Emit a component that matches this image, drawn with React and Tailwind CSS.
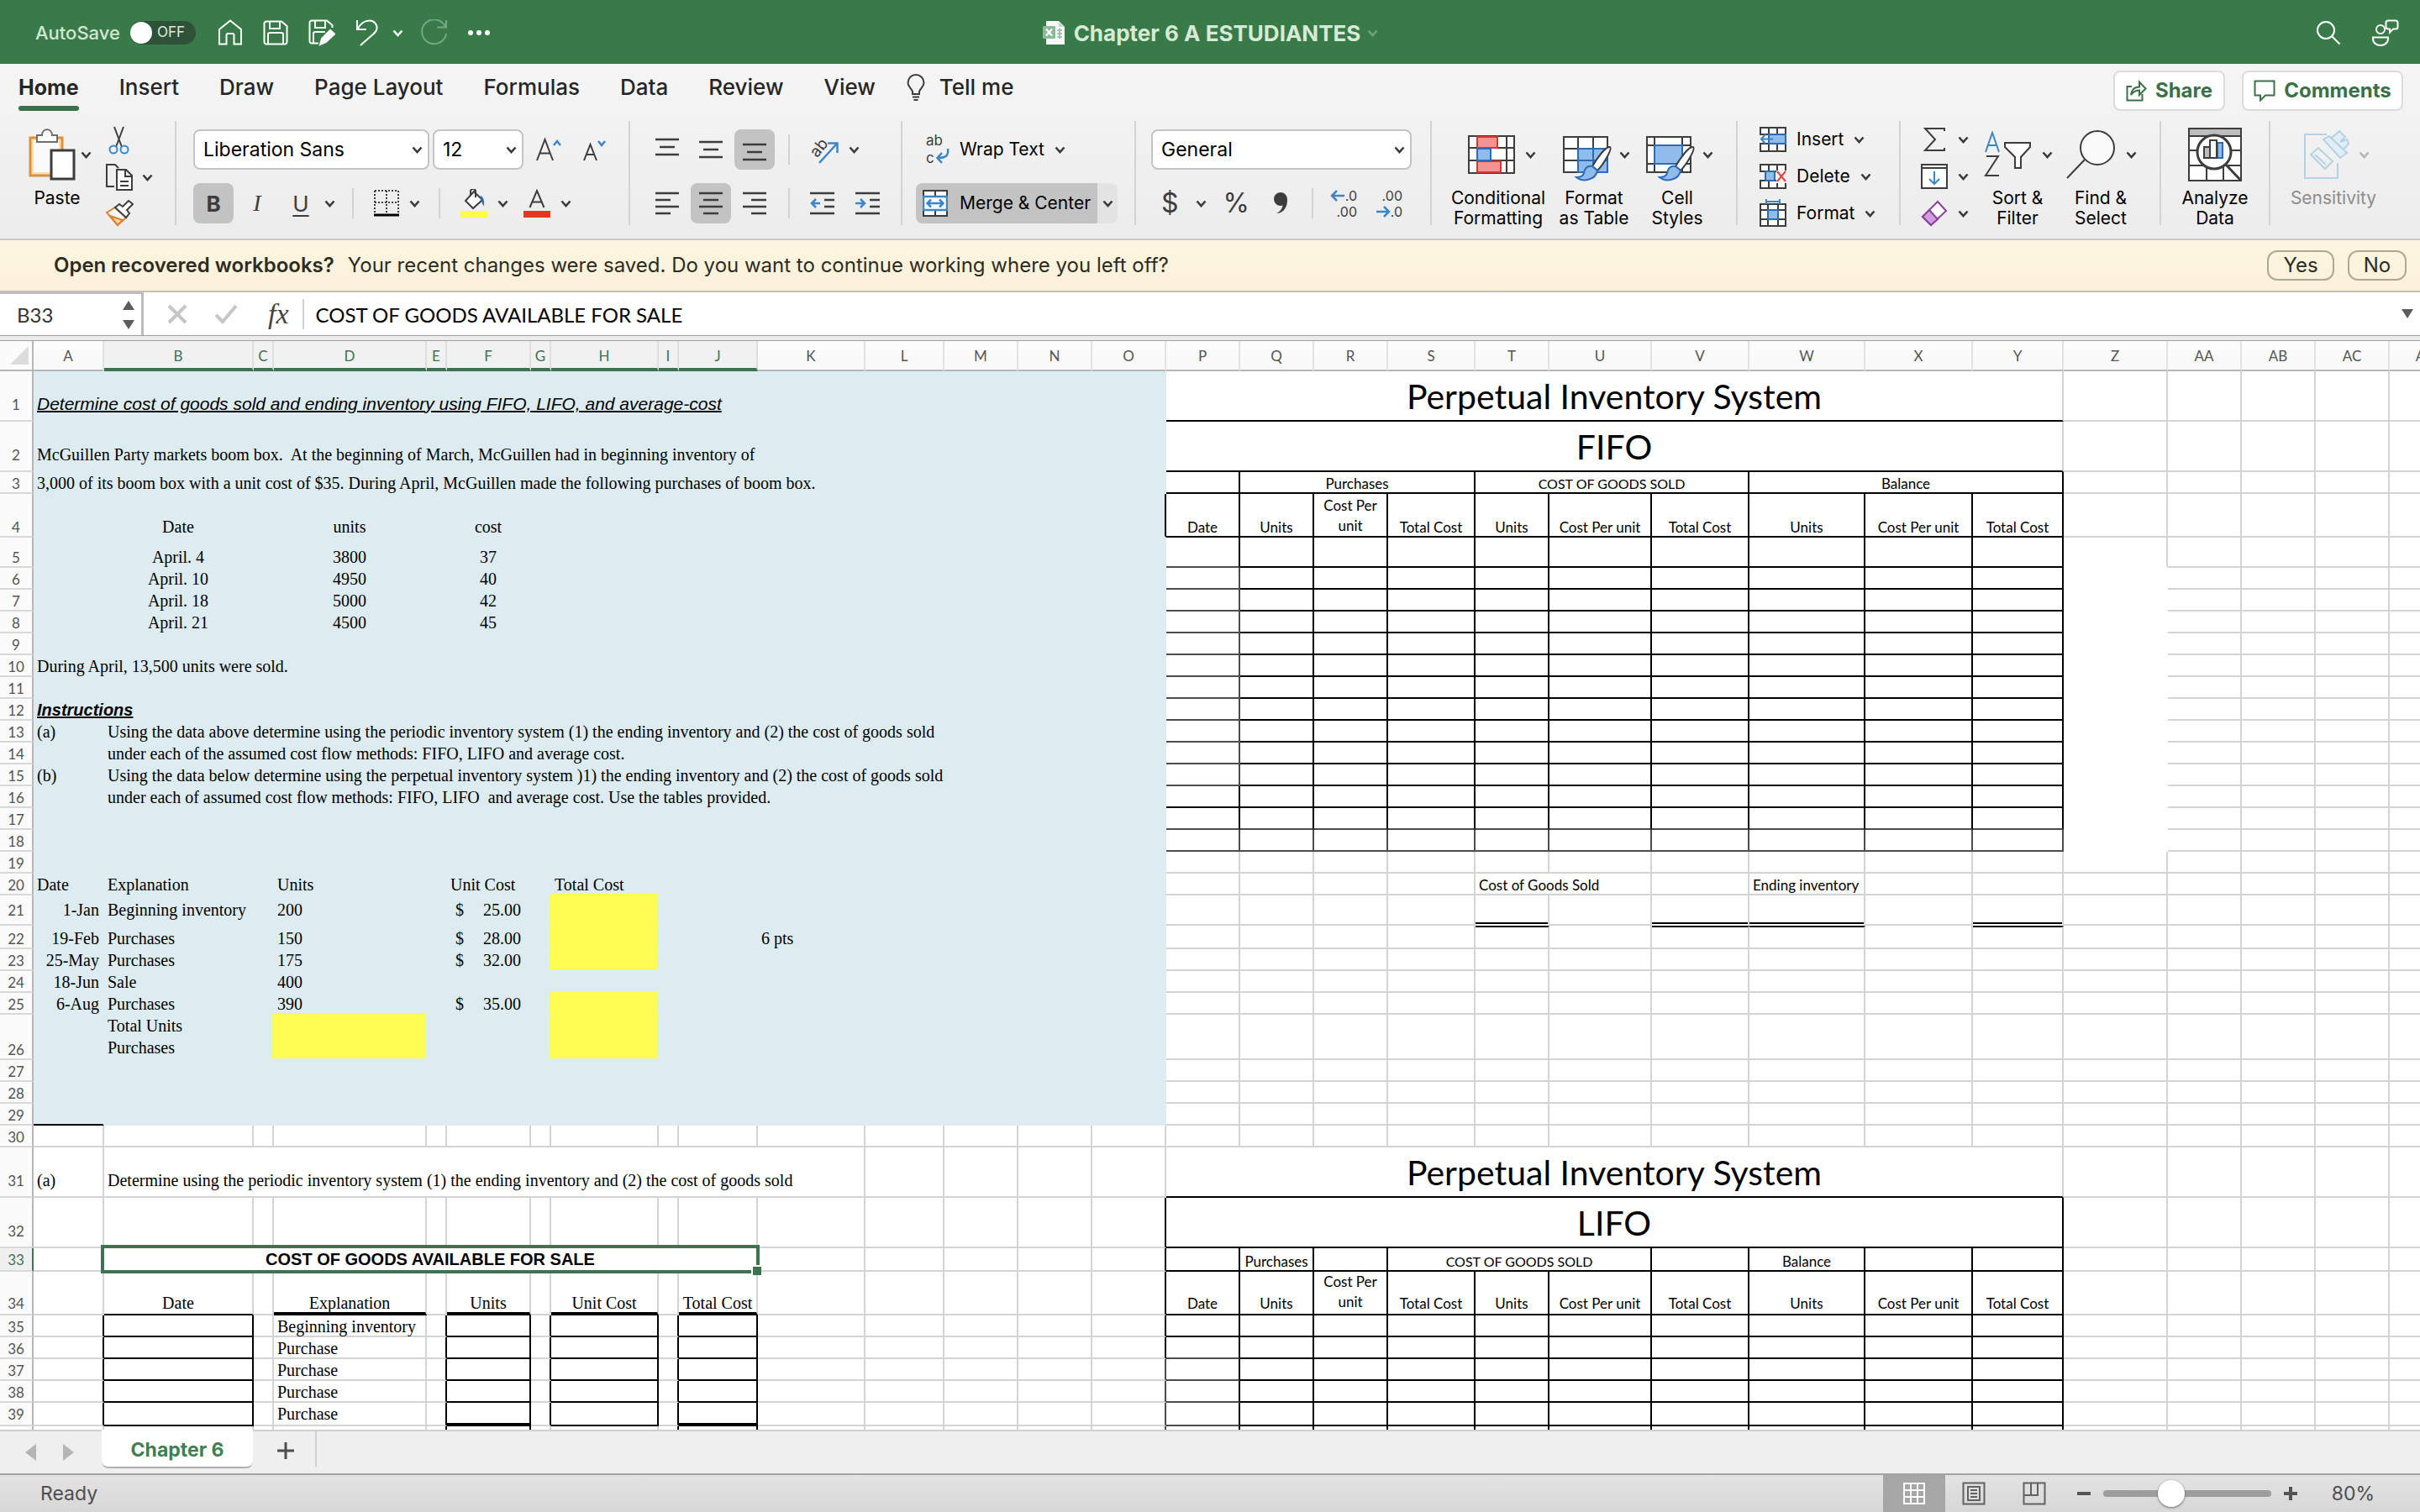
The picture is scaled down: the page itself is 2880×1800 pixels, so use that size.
import clsx from "clsx";

const COLS = [
  ["A", 84], ["B", 178], ["C", 24], ["D", 182], ["E", 24], ["F", 100], ["G", 24], ["H", 128], ["I", 24], ["J", 94],
  ["K", 128], ["L", 94], ["M", 88], ["N", 88], ["O", 88], ["P", 88], ["Q", 88], ["R", 88], ["S", 104], ["T", 88],
  ["U", 122], ["V", 116], ["W", 138], ["X", 128], ["Y", 108], ["Z", 124], ["AA", 88], ["AB", 88], ["AC", 88], ["AD", 88],
];

const ROW_HEIGHTS = [
  60, 60, 26, 52, 36, 26, 26, 26, 26, 26, 26, 26, 26, 26, 26, 26, 26, 26, 26, 26,
  36, 28, 26, 26, 26, 54, 26, 26, 26, 26, 60, 60, 28, 52, 26, 26, 26, 26, 28, 26,
];

const TABLE_WIDTH = 40 + COLS.reduce((sum, [, w]) => sum + w, 0);

// extra space under the baseline in the taller rows
const ROW_PAD = { 1: "pb-2", 2: "pb-2", 21: "pb-1.5", 31: "pb-2", 32: "pb-2", 33: "pb-0.5", 34: "pb-0.5", 39: "pb-0.5" };

const SERIF = "font-['Liberation_Serif',serif] text-[20px] leading-[22px]";
const LATO = "font-['Lato',sans-serif] text-[17px] leading-5";
const LATO_CAPS = "font-['Lato',sans-serif] text-[16px] leading-5";
const TITLE = "font-['Lato',sans-serif] text-[41px] leading-[56px]";
const ARIAL = "font-['Liberation_Sans',sans-serif] text-[20px] leading-[22px]";
const ARIAL_LG = "font-['Liberation_Sans',sans-serif] text-[21px] leading-[22px]";

const CELLS = {
  A1: { t: "Determine cost of goods sold and ending inventory using FIFO, LIFO, and average-cost", span: 15, font: ARIAL_LG, c: "italic underline decoration-2" },
  A2: { t: "McGuillen Party markets boom box.  At the beginning of March, McGuillen had in beginning inventory of", span: 15 },
  A3: { t: "3,000 of its boom box with a unit cost of $35. During April, McGuillen made the following purchases of boom box.", span: 15 },
  B4: { t: "Date", align: "center" },
  D4: { t: "units", align: "center" },
  F4: { t: "cost", align: "center" },
  B5: { t: "April. 4", align: "center" },
  D5: { t: "3800", align: "center" },
  F5: { t: "37", align: "center" },
  B6: { t: "April. 10", align: "center" },
  D6: { t: "4950", align: "center" },
  F6: { t: "40", align: "center" },
  B7: { t: "April. 18", align: "center" },
  D7: { t: "5000", align: "center" },
  F7: { t: "42", align: "center" },
  B8: { t: "April. 21", align: "center" },
  D8: { t: "4500", align: "center" },
  F8: { t: "45", align: "center" },
  A10: { t: "During April, 13,500 units were sold.", span: 15 },
  A12: { t: "Instructions", span: 15, font: ARIAL, c: "font-bold italic underline decoration-2" },
  A13: { t: "(a)" },
  B13: { t: "Using the data above determine using the periodic inventory system (1) the ending inventory and (2) the cost of goods sold", span: 14 },
  B14: { t: "under each of the assumed cost flow methods: FIFO, LIFO and average cost.", span: 14 },
  A15: { t: "(b)" },
  B15: { t: "Using the data below determine using the perpetual inventory system )1) the ending inventory and (2) the cost of goods sold", span: 14 },
  B16: { t: "under each of assumed cost flow methods: FIFO, LIFO  and average cost. Use the tables provided.", span: 14 },
  A20: { t: "Date" },
  B20: { t: "Explanation" },
  D20: { t: "Units" },
  F20: { t: "Unit Cost" },
  H20: { t: "Total Cost" },
  A21: { t: "1-Jan", align: "right" },
  B21: { t: "Beginning inventory" },
  D21: { t: "200" },
  F21: { money: "25.00" },
  A22: { t: "19-Feb", align: "right" },
  B22: { t: "Purchases" },
  D22: { t: "150" },
  F22: { money: "28.00" },
  K22: { t: "6 pts" },
  A23: { t: "25-May", align: "right" },
  B23: { t: "Purchases" },
  D23: { t: "175" },
  F23: { money: "32.00" },
  A24: { t: "18-Jun", align: "right" },
  B24: { t: "Sale" },
  D24: { t: "400" },
  A25: { t: "6-Aug", align: "right" },
  B25: { t: "Purchases" },
  D25: { t: "390" },
  F25: { money: "35.00" },
  B26: { t: "Total Units\nPurchases", font: "font-['Liberation_Serif',serif] text-[20px] leading-[26px]" },
  A31: { t: "(a)" },
  B31: { t: "Determine using the periodic inventory system (1) the ending inventory and (2) the cost of goods sold", span: 10 },
  B33: { t: "COST OF GOODS AVAILABLE FOR SALE", span: 9, selected: true, font: ARIAL, align: "center", c: "font-bold" },
  B34: { t: "Date", align: "center" },
  D34: { t: "Explanation", align: "center" },
  F34: { t: "Units", align: "center" },
  H34: { t: "Unit Cost", align: "center" },
  J34: { t: "Total Cost", align: "center" },
  D35: { t: "Beginning inventory" },
  D36: { t: "Purchase" },
  D37: { t: "Purchase" },
  D38: { t: "Purchase" },
  D39: { t: "Purchase" },

  P1: { t: "Perpetual Inventory System", span: 10, font: TITLE, align: "center", flush: true },
  P2: { t: "FIFO", span: 10, font: TITLE, align: "center", flush: true },
  Q3: { t: "Purchases", span: 3, font: LATO, align: "center" },
  T3: { t: "COST OF GOODS SOLD", span: 3, font: LATO_CAPS, align: "center" },
  W3: { t: "Balance", span: 3, font: LATO, align: "center" },
  T20: { t: "Cost of Goods Sold", span: 2, font: LATO },
  W20: { t: "Ending inventory", font: LATO },
  P31: { t: "Perpetual Inventory System", span: 10, font: TITLE, align: "center", flush: true },
  P32: { t: "LIFO", span: 10, font: TITLE, align: "center", flush: true },
  Q33: { t: "Purchases", font: LATO, align: "center", flush: true },
  S33: { t: "COST OF GOODS SOLD", span: 3, font: LATO_CAPS, align: "center", flush: true },
  W33: { t: "Balance", font: LATO, align: "center", flush: true },
};

const TABLE_HEADS = {
  P: "Date",
  Q: "Units",
  R: "Cost Per\nunit",
  S: "Total Cost",
  T: "Units",
  U: "Cost Per unit",
  V: "Total Cost",
  W: "Units",
  X: "Cost Per unit",
  Y: "Total Cost",
};

Object.entries(TABLE_HEADS).forEach(([col, t]) => {
  const font = col === "R" ? "font-['Lato',sans-serif] text-[17px] leading-6" : LATO;
  CELLS[`${col}4`] = { t, font, align: "center" };
  CELLS[`${col}34`] = { t, font, align: "center" };
});

const ALIGN = { left: "px-1", center: "text-center", right: "px-1 text-right" };

const RIGHT = {
  grid: "border-r-[#d4d4d4]",
  black: "border-r-black",
  thin: "border-r-[#4c4c4c]",
  blue: "border-r-[#ddecf1]",
  yellow: "border-r-[#fffd54]",
  white: "border-r-white",
};

const BOTTOM = {
  grid: "border-b-2 border-b-[#d4d4d4]",
  black: "border-b-2 border-b-black",
  thick: "border-b-4 border-b-black",
  thin: "border-b-2 border-b-[#4c4c4c]",
  blue: "border-b-2 border-b-[#ddecf1]",
  yellow: "border-b-2 border-b-[#fffd54]",
  white: "border-b-2 border-b-white",
};

function rightEdge(i, r) {
  if (r <= 29 && i <= 14) {
    if (i === 6 && [21, 22, 23, 25, 26].includes(r)) return "yellow";
    if (i === 2 && r === 26) return "yellow";
    if (i === 14 && r === 4) return "black";
    return "blue";
  }
  if (i === 14) return r < 32 ? "grid" : r < 37 ? "black" : "thin";
  if (i >= 15 && i <= 24) {
    if (r === 18 || (i === 15 && r >= 6 && r <= 15)) return "thin";
    if ((r >= 3 && r <= 17) || r >= 32) return "black";
    return "grid";
  }
  if (i === 25 && r >= 6 && r <= 18) return "white";
  if (r >= 35 && r <= 39 && [0, 1, 4, 5, 6, 7, 8, 9].includes(i)) return "black";
  if (r === 40 && [4, 5, 8, 9].includes(i)) return "black";
  return "grid";
}

function bottomEdge(i, r) {
  if (r <= 29 && i <= 14) {
    if (i === 0 && r === 29) return "black";
    if (i === 7 && [20, 21, 22, 24, 25].includes(r)) return "yellow";
    if (i === 3 && r === 25) return "yellow";
    return "blue";
  }
  if (i >= 15 && i <= 24) {
    if (r <= 4) return "black";
    if (r <= 18) return r >= 17 || (i === 15 && r <= 15) ? "thin" : "black";
    if (r === 21 && isDouble(i)) return "white";
    if (r < 31) return "grid";
    return i === 15 && r >= 36 ? "thin" : "black";
  }
  if (i === 25 && r >= 5 && r <= 18) return "white";
  if (r === 34 && i === 1) return "black";
  if (r === 34 && [3, 5, 7, 9].includes(i)) return "thick";
  if (r >= 35 && r <= 38 && [1, 5, 7, 9].includes(i)) return "black";
  if (r === 39 && [1, 7].includes(i)) return "black";
  if (r === 39 && [5, 9].includes(i)) return "thick";
  return "grid";
}

function isDouble(i) {
  return [19, 21, 22, 24].includes(i);
}

function fill(i, r) {
  if (i === 7 && [21, 22, 23, 25, 26].includes(r)) return "bg-[#fffd54]";
  if (i === 3 && r === 26) return "bg-[#fffd54]";
  return i <= 14 && r <= 29 ? "bg-[#ddecf1]" : "bg-white";
}

function Cell({ i, r, cell }) {
  const last = i + (cell?.span ?? 1) - 1;
  const bottom = bottomEdge(i, r);
  const pad = !cell?.flush && bottom !== "thick" && ROW_PAD[r];
  return (
    <td
      colSpan={cell?.span}
      className={clsx(
        "border-r-2 p-0 align-bottom whitespace-pre text-black",
        RIGHT[rightEdge(last, r)],
        BOTTOM[bottom],
        fill(i, r),
        r === 21 && isDouble(i) && "shadow-[inset_0_-2px_0_#000]",
        r === 22 && isDouble(i) && "border-t-2 border-t-black",
        cell?.selected && "relative"
      )}
    >
      {cell?.t && <div className={clsx(cell.font ?? SERIF, cell.c, ALIGN[cell.align ?? "left"], pad)}>{cell.t}</div>}
      {cell?.money && (
        <div className={clsx("flex justify-between px-2.5", SERIF, pad)}>
          <span>$</span>
          <span>{cell.money}</span>
        </div>
      )}
      {cell?.selected && (
        <>
          <span className="absolute -inset-1 border-4 border-[#3f7250]" />
          <span className="absolute -right-1.5 -bottom-1.5 size-3 border-t-2 border-l-2 border-white bg-[#3f7250]" />
        </>
      )}
    </td>
  );
}

function Row({ r }) {
  const cells = [];
  for (let i = 0; i < COLS.length; ) {
    const cell = CELLS[`${COLS[i][0]}${r}`];
    cells.push(<Cell key={i} i={i} r={r} cell={cell} />);
    i += cell?.span ?? 1;
  }
  const active = r === 33;
  return (
    <tr style={{ height: ROW_HEIGHTS[r - 1] }}>
      <th
        scope="row"
        className={clsx(
          "border-r-2 border-b-2 border-b-[#d9d9d9] p-0 text-center align-bottom font-['Lato',sans-serif] text-[17px] leading-5 font-normal",
          active ? "border-r-[#3f7250] bg-[#f0f0f0] text-[#3f7250]" : "border-r-[#b7b7b7] bg-[#fbfbfb] text-[#555]"
        )}
      >
        <div className={clsx(ROW_PAD[r])}>{r}</div>
      </th>
      {cells}
    </tr>
  );
}

function Sheet() {
  return (
    <div className="min-h-0 flex-1 overflow-hidden bg-white">
      <table className="table-fixed border-separate border-spacing-0" style={{ width: TABLE_WIDTH }}>
        <colgroup>
          <col className="w-10" />
          {COLS.map(([name, w]) => (
            <col key={name} style={{ width: w }} />
          ))}
        </colgroup>
        <thead>
          <tr className="h-9">
            <th className="border-r-2 border-b-2 border-r-[#b7b7b7] border-b-[#b7b7b7] bg-[#fbfbfb] p-0" aria-label="Select all">
              <svg className="ml-3 size-[22px]" viewBox="0 0 22 22">
                <path d="M22 0V22H0Z" fill="#dcdcdc" />
              </svg>
            </th>
            {COLS.map(([name], i) => (
              <th
                key={name}
                scope="col"
                className={clsx(
                  "border-r-2 p-0 text-center font-['Lato',sans-serif] text-[17px] leading-6 font-normal",
                  i >= 1 && i <= 9
                    ? "border-b-4 border-r-[#dedede] border-b-[#3f7250] bg-[#f1f1f1] pt-1 text-[#3f7250]"
                    : "border-b-2 border-r-[#e2e2e2] border-b-[#b7b7b7] bg-linear-to-b from-[#fdfdfd] to-[#f8f8f8] pt-0.5 text-[#555]"
                )}
              >
                {name}
              </th>
            ))}
          </tr>
        </thead>
        <tbody>
          {ROW_HEIGHTS.map((_, k) => (
            <Row key={k} r={k + 1} />
          ))}
        </tbody>
      </table>
    </div>
  );
}

function Chev({ className }) {
  return (
    <svg className={clsx("h-[9px] w-[13px] shrink-0", className ?? "text-[#3a3a3a]")} viewBox="0 0 13 9" fill="none" stroke="currentColor" strokeWidth="2.6">
      <path d="M1.5 1.5 6.5 7 11.5 1.5" />
    </svg>
  );
}

function Icon({ w, h, className, children, label }) {
  return (
    <svg className={clsx("shrink-0", className)} width={w} height={h} viewBox={`0 0 ${w} ${h}`} fill="none" stroke="#3d3d3d" strokeWidth="2" role={label ? "img" : undefined} aria-label={label}>
      {children}
    </svg>
  );
}

function TitleBar() {
  return (
    <header className="grid h-19 grid-cols-[1fr_auto_1fr] items-center bg-[#387b49] px-6 pt-0.5 text-white">
      <div className="flex items-center pl-4.5">
        <span id="autosave" className="w-[113px] text-[22px] font-medium text-[#d3e6d3]">AutoSave</span>
        <button role="switch" aria-checked="false" aria-labelledby="autosave" className="flex h-7 w-[78px] items-center rounded-full bg-[#2d5238] text-[17px] text-[#dfe8e0]">
          <span className="mr-1.5 size-[26px] rounded-full bg-white" />
          OFF
        </button>
        <button aria-label="Home" className="ml-[26px]">
          <Icon w={30} h={32} className="stroke-white"><path d="M2 12 15 1.5 28 12V29.5H19.5V19a2 2 0 0 0-2-2H12.5a2 2 0 0 0-2 2V29.5H2Z" /></Icon>
        </button>
        <button aria-label="Save" className="ml-6">
          <Icon w={30} h={30} className="stroke-white"><path d="M4 1.5H22L28.5 7V26a2.5 2.5 0 0 1-2.5 2.5H4A2.5 2.5 0 0 1 1.5 26V4A2.5 2.5 0 0 1 4 1.5ZM8 2V10H20V2M6 28V17a2 2 0 0 1 2-2H22a2 2 0 0 1 2 2V28" /></Icon>
        </button>
        <button aria-label="Save a copy" className="ml-6">
          <Icon w={32} h={32} className="stroke-white">
            <path d="M12 28.5H4A2.5 2.5 0 0 1 1.5 26V4A2.5 2.5 0 0 1 4 1.5H22L28.5 7V10M8 2V10H20V2M6 28V17a2 2 0 0 1 2-2H20" />
            <path d="M14 30 16 23 26 13 31 17.5 21 27Z" fill="white" />
          </Icon>
        </button>
        <button aria-label="Undo" className="ml-6">
          <Icon w={28} h={32} className="stroke-white"><path d="M2 1V12H13M2.5 11.5C6 5 11 1.5 17 1.5C22 1.5 26 6 25.5 11C25 16 20 18 6 31" /></Icon>
        </button>
        <button aria-label="Undo history" className="ml-4"><Chev className="text-white" /></button>
        <button aria-label="Redo" className="ml-5">
          <Icon w={34} h={32} className="stroke-[#76a582]"><path d="M31 1V9.5H20M30 9A14.5 14.5 0 1 0 31 17" /></Icon>
        </button>
        <button aria-label="More commands" className="ml-5.5">
          <Icon w={28} h={8} className="fill-white stroke-none"><circle cx="4" cy="4" r="3" /><circle cx="14" cy="4" r="3" /><circle cx="24" cy="4" r="3" /></Icon>
        </button>
      </div>
      <h1 className="flex items-center text-[26px] font-bold text-[#d7ead8]">
        <Icon w={28} h={30} className="mr-2.5 stroke-none">
          <path d="M5 1H20L27 8V29H5Z" fill="#f5faf5" />
          <path d="M20 1V8H27Z" fill="#c9dccb" />
          <rect x="1" y="7" width="15" height="15" rx="1" fill="#8fb89a" />
          <path d="M5 10.5 12 18.5M12 10.5 5 18.5" stroke="#fff" strokeWidth="2" />
          <path d="M18 12H24M18 16H24M18 20H24M21 10V22" stroke="#8fb89a" strokeWidth="1.5" />
        </Icon>
        Chapter 6 A ESTUDIANTES
        <Chev className="ml-2 text-[#6ea27b]" />
      </h1>
      <div className="flex items-center justify-end gap-9">
        <button aria-label="Search"><Icon w={30} h={30} className="stroke-white"><circle cx="12" cy="12" r="10" /><path d="M19.5 19.5 28.5 28.5" /></Icon></button>
        <button aria-label="Collaborate">
          <Icon w={34} h={32} className="stroke-white">
            <circle cx="11" cy="12" r="5" />
            <path d="M2 21.5H20V23C20 28 16 31 11 31S2 28 2 23Z" />
            <path d="M20 1.5H29a2.5 2.5 0 0 1 2.5 2.5V9a2.5 2.5 0 0 1-2.5 2.5H26L22 15.5V11.5H20A2.5 2.5 0 0 1 17.5 9V4A2.5 2.5 0 0 1 20 1.5Z" />
          </Icon>
        </button>
      </div>
    </header>
  );
}

const TABS = ["Insert", "Draw", "Page Layout", "Formulas", "Data", "Review", "View"];

function RibbonTabs() {
  return (
    <nav className="flex h-17 items-start pr-5 pl-5.5 text-[26px] leading-8 font-medium text-[#262626]">
      <div className="flex gap-12 pt-3">
        <button className="flex flex-col gap-1.5 text-[25px] font-bold">
          Home
          <span className="h-1.5 w-full rounded-full bg-[#3b7048]" />
        </button>
        {TABS.map((t) => (
          <button key={t} className="self-start">{t}</button>
        ))}
      </div>
      <button className="ml-9 flex items-center gap-4 pt-3">
        <Icon w={24} h={32}><path d="M8 24V21C7 17.5 2.5 15.5 2.5 10.5A9.5 9.5 0 0 1 21.5 10.5C21.5 15.5 17 17.5 16 21V24ZM8 27.5H16M9.5 31H14.5" /></Icon>
        Tell me
      </button>
      <div className="ml-auto flex gap-5 pt-2 text-[24px] font-bold text-[#3b7048]">
        <button className="flex h-12 w-[133px] items-center justify-center gap-2.5 rounded-lg border-2 border-[#dcdcdc] bg-white">
          <Icon w={25} h={26} className="stroke-[#3b7048]">
            <path d="M7 8H1.5V24.5H19.5V17M6 18C7 11 11 8.5 16 8.5V2.5L23.5 10.5 16 18V12.5C11 12.5 8.5 14 6 18Z" />
          </Icon>
          Share
        </button>
        <button className="flex h-12 w-48 items-center justify-center gap-2.5 rounded-lg border-2 border-[#dcdcdc] bg-white">
          <Icon w={26} h={26} className="stroke-[#3b7048]"><path d="M1.5 1.5H24.5V18.5H14L8 24.5V18.5H1.5Z" /></Icon>
          Comments
        </button>
      </div>
    </nav>
  );
}

function Group({ className, children }) {
  return <div className={clsx("h-31 shrink-0 border-r-2 border-[#d3d3d3]", className)}>{children}</div>;
}

function Divider({ className }) {
  return <span className={clsx("h-9 w-0.5 shrink-0 bg-[#d3d3d3]", className)} />;
}

function PickList({ label, value, className }) {
  return (
    <div className={clsx("relative flex items-center", className)}>
      <select aria-label={label} className="h-12 w-full appearance-none rounded-lg border-2 border-[#c4c4c4] bg-white px-2.5 text-[23px] text-black">
        <option>{value}</option>
      </select>
      <Chev className="pointer-events-none absolute right-2 text-[#3a3a3a]" />
    </div>
  );
}

const ALIGN_ICONS = {
  top: "M0 3H28M5 12H23M0 21H28",
  middle: "M0 6H28M5 15H23M0 24H28",
  bottom: "M0 9H28M5 18H23M0 27H28",
  left: "M0 3H28M0 11H18M0 19H28M0 27H18",
  center: "M0 3H28M5 11H23M0 19H28M5 27H23",
  right: "M0 3H28M10 11H28M0 19H28M10 27H28",
};

function AlignButton({ kind, on }) {
  return (
    <button aria-label={`Align ${kind}`} aria-pressed={!!on} className={clsx("grid h-12 w-12 place-items-center rounded-lg", on && "bg-[#c3c3c3]")}>
      <Icon w={28} h={30}><path d={ALIGN_ICONS[kind]} strokeWidth="2.5" /></Icon>
    </button>
  );
}

function BigButton({ icon, lines, className, chevron = true, disabled }) {
  return (
    <button disabled={disabled} className={clsx("flex flex-col items-center text-[21px] leading-6", disabled ? "text-[#8c8c8c]" : "text-black", className)}>
      <span className="flex h-20 w-full shrink-0 items-center justify-center gap-2">
        {icon}
        {chevron && <Chev className={disabled ? "text-[#b5b5b5]" : undefined} />}
      </span>
      {lines.map((l) => (
        <span key={l} className="whitespace-nowrap">{l}</span>
      ))}
    </button>
  );
}

function SmallButton({ icon, text }) {
  return (
    <button className="flex h-11 shrink-0 items-center text-[21px] text-black">
      {icon}
      {text && <span className="ml-3">{text}</span>}
      <Chev className="ml-3 text-[#3a3a3a]" />
    </button>
  );
}

const GRID_BOX = "M2 2H54V44H2ZM2 16H54M2 30H54M19 2V44M37 2V44";

function Brush() {
  return (
    <>
      <path d="M57 14C60 16 50 34 42 42L36 37C42 27 52 13 57 14Z" fill="#fff" />
      <path d="M36 37C30 36 27 40 26 45C25 49 22 50 17 50C24 56 40 54 42 42Z" fill="#8fbcea" stroke="#2d6cb5" />
    </>
  );
}

function ClipboardGroup() {
  return (
    <Group className="flex w-[210px]">
      <div className="flex flex-col pt-2 pl-8">
        <button className="flex items-center gap-1.5" aria-label="Paste">
          <Icon w={58} h={64}>
            <path d="M11 12H4V57H42V12H36" stroke="#dd9140" strokeWidth="3" fill="#fbdfa4" />
            <path d="M8 15H38V53H8Z" fill="#fafafa" stroke="none" />
            <path d="M12 9H18C18 0 30 0 30 9H36V17H12Z" fill="#fff" stroke="#6f6f6f" />
            <path d="M29 27H56V61H29Z" fill="#fff" strokeWidth="3" />
          </Icon>
          <Chev />
        </button>
        <span className="w-18 pt-0.5 text-center text-[21px] leading-9 text-black">Paste</span>
      </div>
      <div className="flex flex-col gap-2.5 pt-1.5 pl-4">
        <button aria-label="Cut">
          <Icon w={32} h={34}>
            <path d="M11 1 20 25M22 1 13 25" />
            <circle cx="10" cy="28" r="4.5" stroke="#3b86c8" /><circle cx="23" cy="28" r="4.5" stroke="#3b86c8" />
          </Icon>
        </button>
        <button aria-label="Copy" className="flex items-center gap-2.5">
          <Icon w={34} h={34}>
            <path d="M11 28H2V2H12L16 6" />
            <path d="M14 8H25L32 15V32H14ZM24 8V16H32M18 22H28M18 27H28" fill="#fff" />
          </Icon>
          <Chev />
        </button>
        <button aria-label="Format painter">
          <Icon w={34} h={32}>
            <path d="M2 15 12 9 25 21 15 30Z" fill="#fff" stroke="#dd7f30" />
            <path d="M6 19 21 24 15 30Z" fill="#fbd79a" stroke="#dd7f30" />
            <path d="M12 9 17 5 21 8 28 1 33 5 26 12 29 16 25 21Z" fill="#fff" />
          </Icon>
        </button>
      </div>
    </Group>
  );
}

function FontGroup() {
  return (
    <Group className="flex w-[540px] flex-col gap-4 pt-2.5 pl-5">
      <div className="flex h-12 items-center">
        <PickList label="Font" value="Liberation Sans" className="w-[281px]" />
        <PickList label="Font size" value="12" className="ml-1 w-27" />
        <button aria-label="Increase font size" className="ml-3.5">
          <Icon w={32} h={32}><path d="M2 29 11.5 4 21 29M5.5 20.5H17.5" /><path d="M22 11 26 6 30 11" stroke="#3b86c8" strokeWidth="2.5" /></Icon>
        </button>
        <button aria-label="Decrease font size" className="ml-6">
          <Icon w={30} h={32}><path d="M2 29 9.5 10 17 29M5 22H14" /><path d="M19 6 23 11 27 6" stroke="#3b86c8" strokeWidth="2.5" /></Icon>
        </button>
      </div>
      <div className="flex h-12 items-center gap-3 text-[26px] text-[#3d3d3d]">
        <div className="flex gap-1">
          <button className="size-12 rounded-lg bg-[#c3c3c3] font-bold" aria-pressed="true">B</button>
          <button className="size-12 font-['Liberation_Serif',serif] text-[28px] italic">I</button>
          <button className="size-12 underline decoration-2 underline-offset-4">U</button>
        </div>
        <Chev className="-ml-2 text-[#3a3a3a]" />
        <Divider className="ml-2" />
        <button aria-label="Borders" className="ml-3">
          <Icon w={30} h={32}><path d="M1 1H29M1 1V28M29 1V28M15 1V28M1 15H29" strokeDasharray="2 2" /><path d="M0 30H30" stroke="#000" strokeWidth="3" /></Icon>
        </button>
        <Chev />
        <Divider className="ml-2.5" />
        <button aria-label="Fill color" className="ml-3">
          <Icon w={32} h={34}>
            <path d="M16 3 6 14 15 23 26 13ZM12 8V3a3 3 0 0 1 6 0V10" fill="#fff" />
            <path d="M24 8C28 10 28.5 15 28 20C25 18 26 13 22 10Z" fill="#2d6cb5" stroke="none" />
            <path d="M0 26H32V34H0Z" fill="#ffff45" stroke="none" />
          </Icon>
        </button>
        <Chev />
        <button aria-label="Font color" className="ml-1.5">
          <Icon w={32} h={34}><path d="M7.5 22 16 2 24.5 22M10.5 15.5H21.5" /><path d="M0 26H32V34H0Z" fill="#ea3323" stroke="none" /></Icon>
        </button>
        <Chev />
      </div>
    </Group>
  );
}

function AlignGroup() {
  return (
    <Group className="flex w-[324px] flex-col gap-4 pt-2.5 pl-5">
      <div className="flex h-12 items-center gap-1">
        <AlignButton kind="top" />
        <AlignButton kind="middle" />
        <AlignButton kind="bottom" on />
        <Divider className="ml-3" />
        <button aria-label="Orientation" className="ml-5 flex items-center gap-2.5">
          <Icon w={36} h={38} className="overflow-visible">
            <text x="0" y="24" transform="rotate(-52 10 18)" fontSize="19" fill="#3d3d3d" stroke="none">ab</text>
            <path d="M11 35 32 12M21 11.5H32.5V23" stroke="#3b86c8" strokeWidth="2.5" />
          </Icon>
          <Chev />
        </button>
      </div>
      <div className="flex h-12 items-center gap-1">
        <AlignButton kind="left" />
        <AlignButton kind="center" on />
        <AlignButton kind="right" />
        <Divider className="ml-3" />
        <button aria-label="Decrease indent" className="ml-5">
          <Icon w={30} h={28}><path d="M0 2H29M17 10H29M17 18H29M0 26H29" strokeWidth="2.5" /><path d="M12 14H2M7 9 2 14 7 19" stroke="#3b86c8" strokeWidth="2.5" /></Icon>
        </button>
        <button aria-label="Increase indent" className="ml-5">
          <Icon w={30} h={28}><path d="M0 2H29M17 10H29M17 18H29M0 26H29" strokeWidth="2.5" /><path d="M0 14H11M6 9 11 14 6 19" stroke="#3b86c8" strokeWidth="2.5" /></Icon>
        </button>
      </div>
    </Group>
  );
}

function MergeGroup() {
  return (
    <Group className="flex w-[278px] flex-col gap-4 pt-2.5 pl-4 text-[21px] text-black">
      <button className="flex h-12 items-center pl-3">
        <Icon w={30} h={42} className="overflow-visible">
          <text x="0" y="16" fontSize="17" fill="#3d3d3d" stroke="none">ab</text>
          <text x="0" y="37" fontSize="17" fill="#3d3d3d" stroke="none">c</text>
          <path d="M26 20C27 28 24 31 14 31M19 25 13.5 31 19 37" stroke="#3b86c8" strokeWidth="2.5" />
        </Icon>
        <span className="ml-2.5">Wrap Text</span>
        <Chev className="ml-3 text-[#3a3a3a]" />
      </button>
      <div className="flex h-12 w-60 overflow-hidden rounded-lg bg-[#e3e3e3]">
        <button className="flex w-[216px] items-center gap-3.5 bg-[#c3c3c3] pl-2 whitespace-nowrap" aria-pressed="true">
          <Icon w={30} h={32}>
            <path d="M1 1H29V31H1ZM15 1V31" fill="#fff" />
            <path d="M1 8H29V24H1Z" fill="#fff" stroke="#3b86c8" strokeWidth="2.5" />
            <path d="M6 16H24M10 11.5 5.5 16 10 20.5M20 11.5 24.5 16 20 20.5" stroke="#3b86c8" strokeWidth="2.5" />
          </Icon>
          Merge &amp; Center
        </button>
        <button aria-label="Merge options" className="pl-1.5"><Chev /></button>
      </div>
    </Group>
  );
}

function NumberGroup() {
  return (
    <Group className="flex w-[352px] flex-col gap-4 pt-2.5 pl-4.5 text-[32px] text-[#3d3d3d]">
      <PickList label="Number format" value="General" className="w-[310px]" />
      <div className="flex h-12 items-center gap-5 pl-3">
        <button className="flex items-center gap-5">$<Chev /></button>
        <button>%</button>
        <button aria-label="Comma style" className="ml-2">
          <Icon w={18} h={26}><path d="M9 0A8 8 0 1 0 9 16C11 16 11.5 15 11.5 15C11 20 8 23 4 25C12 25 17 18 17 9C17 3 13 0 9 0Z" fill="#3d3d3d" stroke="none" /></Icon>
        </button>
        <Divider className="ml-2" />
        <button aria-label="Increase decimal">
          <Icon w={34} h={42} className="overflow-visible">
            <text x="32" y="18" textAnchor="end" fontSize="16" fill="#3d3d3d" stroke="none">.0</text>
            <text x="32" y="37" textAnchor="end" fontSize="16" fill="#3d3d3d" stroke="none">.00</text>
            <path d="M17 12H2M8 6 2 12 8 18" stroke="#3b86c8" strokeWidth="2.5" />
          </Icon>
        </button>
        <button aria-label="Decrease decimal">
          <Icon w={34} h={42} className="overflow-visible">
            <text x="32" y="18" textAnchor="end" fontSize="16" fill="#3d3d3d" stroke="none">.00</text>
            <text x="32" y="37" textAnchor="end" fontSize="16" fill="#3d3d3d" stroke="none">.0</text>
            <path d="M1 31H16M10 25 16 31 10 37" stroke="#3b86c8" strokeWidth="2.5" />
          </Icon>
        </button>
      </div>
    </Group>
  );
}

function StylesGroup() {
  return (
    <Group className="flex w-[364px] pl-5">
      <BigButton
        className="w-[118px]"
        lines={["Conditional", "Formatting"]}
        icon={
          <Icon w={56} h={46} className="mr-1 ml-2">
            <path d="M1 1H55V45H1ZM1 15H55M1 30H55M46 1V45M11 1V45" fill="#fff" />
            <path d="M11 2H35V15H11ZM11 31H39V44H11Z" fill="#f29494" stroke="#d0392b" />
            <path d="M11 16H27V30H11Z" fill="#8fbcea" stroke="#2d6cb5" />
          </Icon>
        }
      />
      <BigButton
        className="w-[110px]"
        lines={["Format", "as Table"]}
        icon={
          <Icon w={60} h={56} className="-mb-2.5 ml-1">
            <path d={GRID_BOX} fill="#fff" />
            <path d="M19 16H54V44H19Z" fill="#8fbcea" stroke="#2d6cb5" />
            <path d="M19 30H54M37 16V44" stroke="#2d6cb5" />
            <Brush />
          </Icon>
        }
      />
      <BigButton
        className="w-[88px]"
        lines={["Cell", "Styles"]}
        icon={
          <Icon w={60} h={56} className="-mb-2.5 ml-1">
            <path d="M2 2H54V44H2ZM2 12H54M2 34H54M11 2V44M44 2V44" fill="#fff" />
            <path d="M11 12H44V34H11Z" fill="#8fbcea" stroke="#2d6cb5" />
            <Brush />
          </Icon>
        }
      />
    </Group>
  );
}

function CellsGroup() {
  return (
    <Group className="flex w-[194px] flex-col pl-6.5">
      <SmallButton
        text="Insert"
        icon={
          <Icon w={32} h={30}>
            <path d="M1 1H31V29H1ZM1 9H31M1 20H31M11 1V29M21 1V29" fill="#fff" />
            <path d="M11 9H31V20H11Z" fill="#8fbcea" stroke="#2d6cb5" />
            <path d="M0 10H9V19H0Z" fill="#f3f3f3" stroke="none" />
            <path d="M16 14.5H2M7 9 2 14.5 7 20" stroke="#3b86c8" />
          </Icon>
        }
      />
      <SmallButton
        text="Delete"
        icon={
          <Icon w={32} h={30}>
            <path d="M1 1H31V29H1ZM1 9H31M1 20H31M11 1V29M21 1V29" fill="#fff" />
            <path d="M0 10H6V19H0ZM20 8H32V23H20Z" fill="#f3f3f3" stroke="none" />
            <path d="M7 9H18V20H7Z" fill="#8fbcea" stroke="#2d6cb5" />
            <path d="M21 9 31 21M31 9 21 21" stroke="#e0433a" />
          </Icon>
        }
      />
      <SmallButton
        text="Format"
        icon={
          <Icon w={32} h={34}>
            <path d="M1 6H31V32H1ZM1 13H31M1 24H31M10 6V32M22 6V32" fill="#fff" />
            <path d="M7 0H25V5H7Z" fill="#f3f3f3" stroke="none" />
            <path d="M10 13H22V24H10Z" fill="#8fbcea" stroke="#2d6cb5" />
            <path d="M8 3H24M8 0V6M24 0V6" stroke="#3b86c8" />
          </Icon>
        }
      />
    </Group>
  );
}

function EditingGroup() {
  return (
    <Group className="flex w-[310px] pl-6">
      <div className="flex w-16 flex-col">
        <SmallButton icon={<Icon w={32} h={30} label="AutoSum"><path d="M28 5V2H5L17 15 5 28H28V25" /></Icon>} />
        <SmallButton icon={<Icon w={32} h={30} label="Fill"><path d="M1 1H31V29H1ZM1 5H31" fill="#fff" /><path d="M16 9V24M10 18 16 24 22 18" stroke="#3b86c8" /></Icon>} />
        <SmallButton icon={<Icon w={32} h={32} label="Clear"><path d="M20 2 30 13 12 30 2 20Z" fill="#fff" stroke="#8b3f9e" /><path d="M10 12 20 23 12 30 2 20Z" fill="#cf9ddb" stroke="#8b3f9e" /></Icon>} />
      </div>
      <BigButton
        className="w-[102px]"
        lines={["Sort &", "Filter"]}
        icon={
          <Icon w={58} h={56} className="mr-1">
            <path d="M3 25 11 2 19 25M6 17H16" stroke="#3b86c8" />
            <path d="M4 30H18L3 53H19" />
            <path d="M26 14H56V19L45 31V44H38V31L26 19Z" fill="#fff" />
          </Icon>
        }
      />
      <BigButton
        className="w-24"
        lines={["Find &", "Select"]}
        icon={<Icon w={60} h={60} className="mr-1"><circle cx="38" cy="22" r="20" fill="#fafafa" /><path d="M23 36 2 58" /></Icon>}
      />
    </Group>
  );
}

function Ribbon() {
  return (
    <section className="border-b-2 border-[#c8c8c8] bg-linear-to-b from-[#f5f5f5] to-[#ececec]">
      <RibbonTabs />
      <div className="flex h-35">
        <ClipboardGroup />
        <FontGroup />
        <AlignGroup />
        <MergeGroup />
        <NumberGroup />
        <StylesGroup />
        <CellsGroup />
        <EditingGroup />
        <Group className="w-[130px]">
          <BigButton
            className="w-full"
            chevron={false}
            lines={["Analyze", "Data"]}
            icon={
              <Icon w={66} h={66}>
                <path d="M2 2H64V64H2ZM2 28H64M2 46H64M23 46V64M43 46V64" fill="#fff" />
                <path d="M2 2H64V11H2Z" fill="#bdbdbd" />
                <circle cx="32" cy="30" r="20" fill="#fff" strokeWidth="3" />
                <path d="M20 24H27V37H20Z" fill="#bdbdbd" />
                <path d="M36 19H42V37H36Z" fill="#8fbcea" stroke="#2d6cb5" />
                <path d="M27 16H35V37H27Z" fill="#fff" />
                <path d="M46 45 64 64" strokeWidth="3" />
              </Icon>
            }
          />
        </Group>
        <BigButton
          className="h-31 w-[150px]"
          disabled
          lines={["Sensitivity"]}
          icon={
            <Icon w={60} h={60} className="ml-1 stroke-[#b3d2e6]">
              <path d="M30 6H4V58H43V40" />
              <path d="M11 30 20 22 37 38 28 47ZM16 30 29 42" />
              <path d="M26 12 33 8 54 28 46 34ZM36 10 45 2 52 9 46 15 54 12 56 17 50 24" fill="#e2eef5" />
            </Icon>
          }
        />
      </div>
    </section>
  );
}

function RecoveryBar() {
  return (
    <div className="flex h-[62px] items-center border-b-2 border-[#c4c0b2] bg-linear-to-b from-[#fef6e0] to-[#faf0db] pr-4 pl-16 text-[24px] text-[#2e2b22]">
      <strong className="font-semibold">Open recovered workbooks?</strong>
      <span className="ml-4">Your recent changes were saved. Do you want to continue working where you left off?</span>
      <button className="ml-auto h-9 w-20 rounded-xl border-2 border-[#aea897] leading-8">Yes</button>
      <button className="ml-4 h-9 w-[70px] rounded-xl border-2 border-[#aea897] leading-8">No</button>
    </div>
  );
}

function FormulaBar() {
  return (
    <div className="border-b border-[#a0a0a0] bg-[#ebebeb]">
      <div className="mb-[5px] flex h-[52px] items-center border-b border-[#a0a0a0] bg-white font-['Lato',sans-serif] text-[24px] text-black">
        <div className="flex h-full w-[171px] items-center justify-between border-t-2 border-r-3 border-[#bcbcbc] pr-2 pl-5">
          <input aria-label="Name box" defaultValue="B33" className="w-24 text-[#333] outline-none" />
          <Icon w={14} h={34} className="stroke-none"><path d="M7 0 14 11H0ZM7 34 0 23H14Z" fill="#5c5c5c" /></Icon>
        </div>
        <button aria-label="Cancel" className="ml-7"><Icon w={24} h={24} className="stroke-[#c6c6c6]"><path d="M2 2 22 22M22 2 2 22" strokeWidth="4" /></Icon></button>
        <button aria-label="Enter" className="ml-8"><Icon w={28} h={24} className="stroke-[#c6c6c6]"><path d="M2 13 10 21 26 2" strokeWidth="4" /></Icon></button>
        <button className="ml-9 font-['Liberation_Serif',serif] text-[34px] leading-8 text-[#444] italic" aria-label="Insert function">fx</button>
        <Divider className="ml-4" />
        <input aria-label="Formula" defaultValue="COST OF GOODS AVAILABLE FOR SALE" className="ml-3.5 min-w-0 flex-1 pt-0.5 outline-none" />
        <button aria-label="Expand formula bar" className="pr-2"><Icon w={14} h={11} className="stroke-none"><path d="M0 0H14L7 11Z" fill="#5c5c5c" /></Icon></button>
      </div>
    </div>
  );
}

function SheetTabs() {
  return (
    <div className="flex h-13 items-start border-t-2 border-[#cfcfcf] bg-[#efefef]">
      <div className="flex w-[121px] items-center gap-8 self-center pl-7.5">
        <button aria-label="Previous sheet"><Icon w={13} h={20} className="stroke-none"><path d="M13 0V20L0 10Z" fill="#b5b5b5" /></Icon></button>
        <button aria-label="Next sheet"><Icon w={13} h={20} className="stroke-none"><path d="M0 0V20L13 10Z" fill="#b5b5b5" /></Icon></button>
      </div>
      <button className="-mt-0.5 h-[46px] w-[180px] rounded-b-lg border-b-2 border-[#b0b0b0] bg-white pt-1 text-[23px] font-bold text-[#3f7f52]">Chapter 6</button>
      <button aria-label="Add sheet" className="mb-1 ml-7 self-center"><Icon w={22} h={22} className="stroke-[#4e4e4e]"><path d="M11 1V21M1 11H21" strokeWidth="3" /></Icon></button>
      <span className="ml-6 h-[42px] w-0.5 bg-[#cfcfcf]" />
    </div>
  );
}

function StatusBar() {
  return (
    <footer className="flex h-[46px] items-stretch border-t-2 border-[#a3a3a3] bg-linear-to-b from-[#e3e3e3] to-[#d7d7d7] pr-13.5 pl-12 text-[23px] text-[#4e4e4e]">
      <span className="self-center">Ready</span>
      <button aria-label="Normal view" className="ml-auto grid w-[74px] place-items-center bg-[#a6a6a6]">
        <Icon w={28} h={28} className="stroke-white"><path d="M2 2H26V26H2ZM2 10H26M2 18H26M10 2V26M18 2V26" /></Icon>
      </button>
      <button aria-label="Page layout view" className="ml-5">
        <Icon w={28} h={28} className="stroke-[#626262]"><path d="M1.5 1.5H26.5V26.5H1.5ZM7 6H21V22H7ZM10 10H18M10 14H18M10 18H18" /></Icon>
      </button>
      <button aria-label="Page break view" className="ml-11">
        <Icon w={28} h={28} className="stroke-[#626262]"><path d="M1.5 1.5H26.5V26.5H1.5ZM10 2V16M18 2V16H2" /></Icon>
      </button>
      <button aria-label="Zoom out" className="ml-9"><Icon w={18} h={16} className="stroke-[#555]"><path d="M1 8H17" strokeWidth="4" /></Icon></button>
      <input
        type="range"
        aria-label="Zoom"
        defaultValue="39"
        className="mx-3.5 h-2 w-[200px] appearance-none self-center rounded-full bg-[#9d9d9d] [&::-webkit-slider-thumb]:size-8 [&::-webkit-slider-thumb]:appearance-none [&::-webkit-slider-thumb]:rounded-full [&::-webkit-slider-thumb]:bg-white [&::-webkit-slider-thumb]:shadow-[0_1px_3px_#666]"
      />
      <button aria-label="Zoom in"><Icon w={18} h={18} className="stroke-[#555]"><path d="M1 9H17M9 1V17" strokeWidth="4" /></Icon></button>
      <span className="ml-10 self-center">80%</span>
    </footer>
  );
}

export default function App() {
  return (
    <div className="flex h-screen flex-col overflow-hidden bg-white font-['Inter',sans-serif]">
      <TitleBar />
      <Ribbon />
      <RecoveryBar />
      <FormulaBar />
      <Sheet />
      <SheetTabs />
      <StatusBar />
    </div>
  );
}
